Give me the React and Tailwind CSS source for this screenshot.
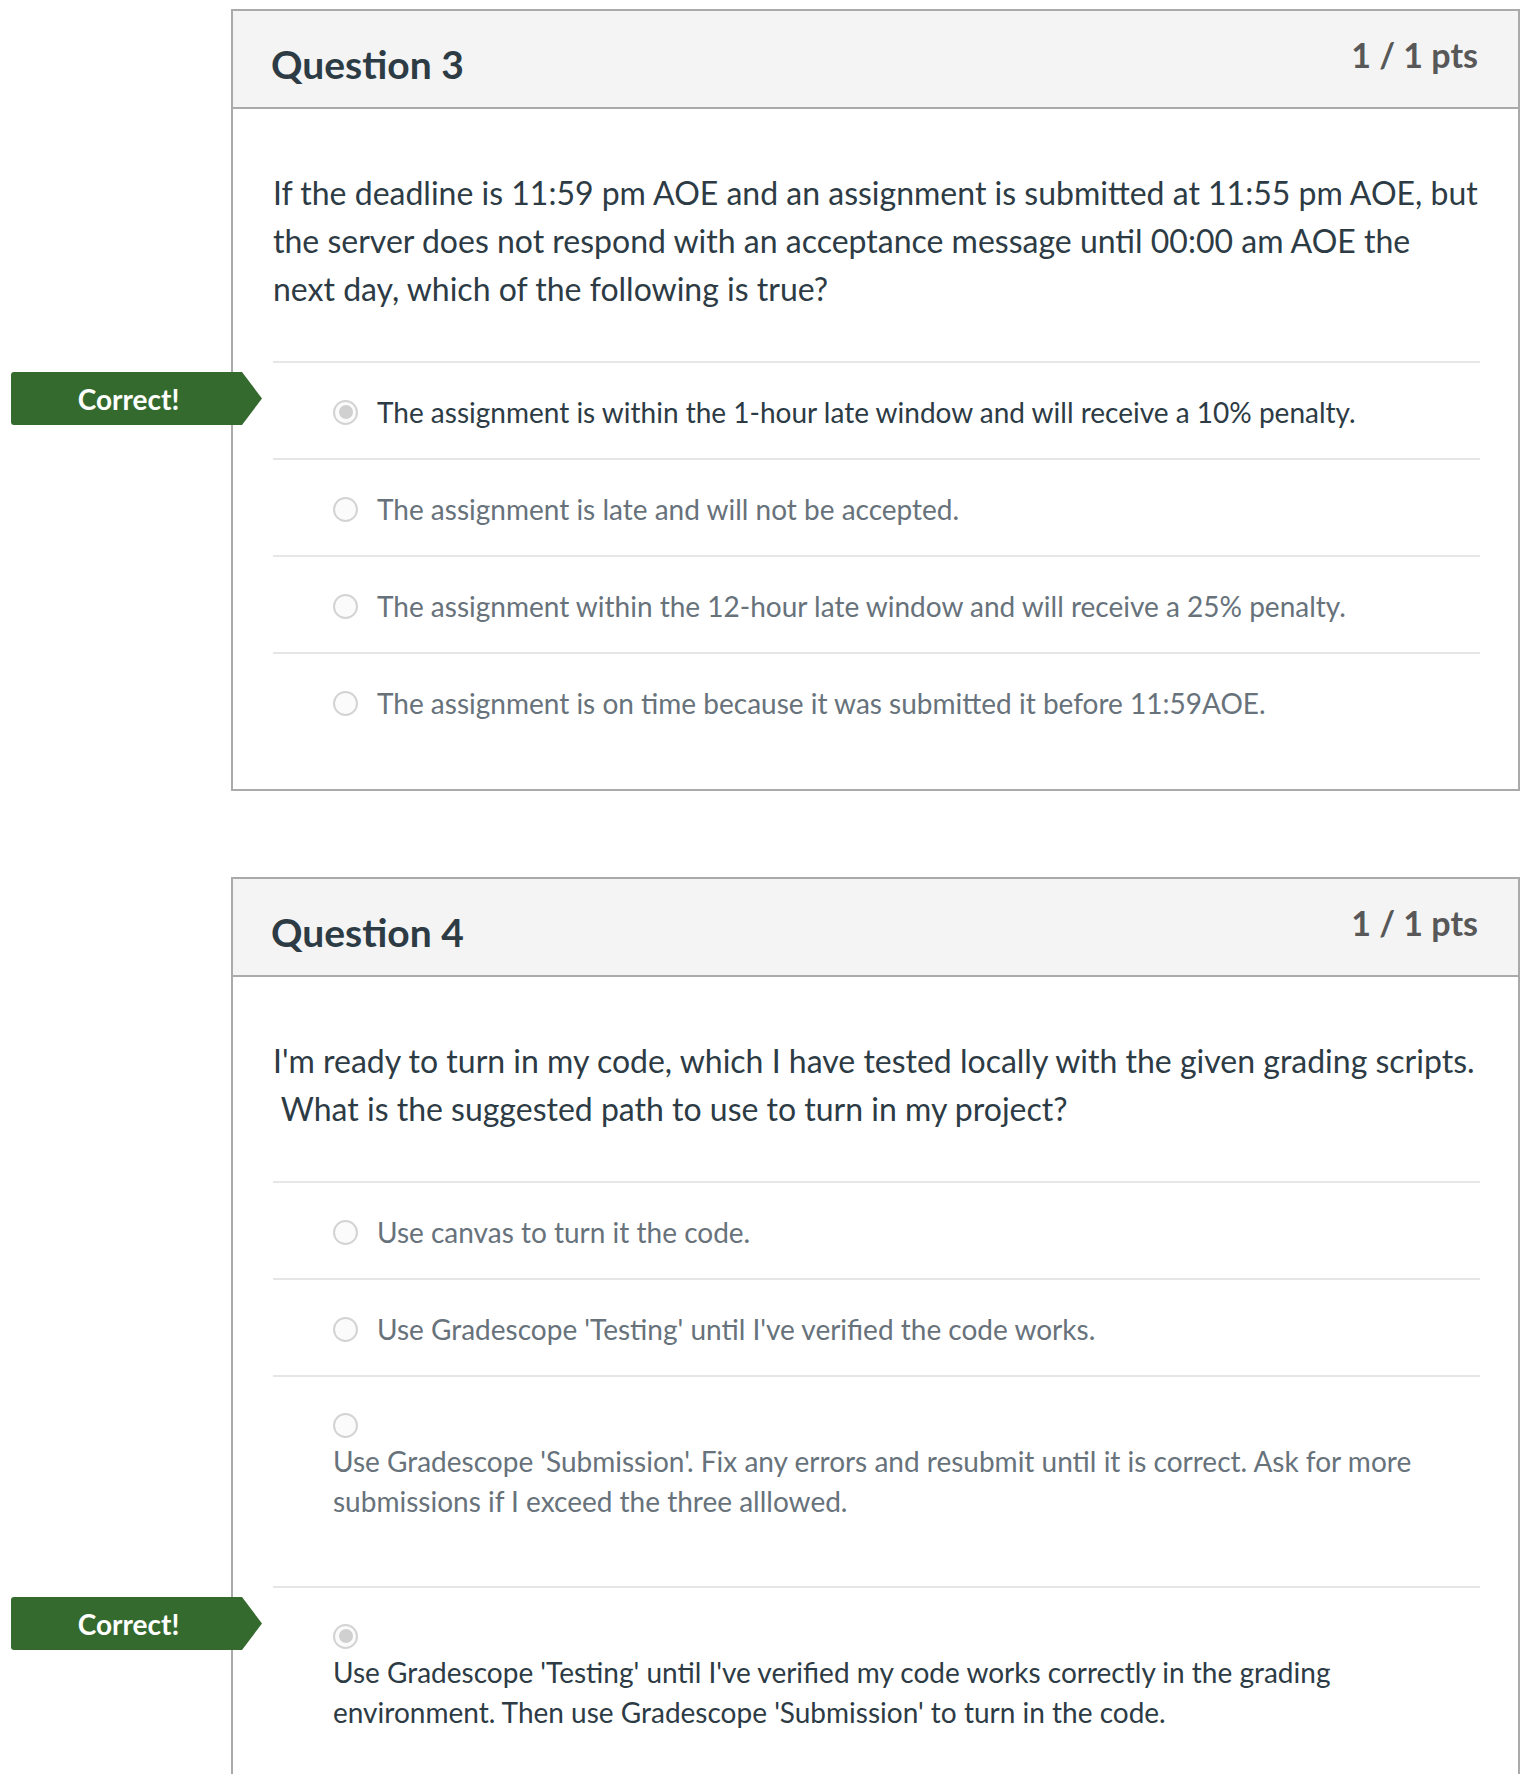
const questions = [
  {
    title: 'Question 3',
    points: '1 / 1 pts',
    text: [
      'If the deadline is 11:59 pm AOE and an assignment is submitted at 11:55 pm AOE, but',
      'the server does not respond with an acceptance message until 00:00 am AOE the',
      'next day, which of the following is true?',
    ],
    answers: [
      { lines: ['The assignment is within the 1-hour late window and will receive a 10% penalty.'], selected: true, correct: true },
      { lines: ['The assignment is late and will not be accepted.'] },
      { lines: ['The assignment within the 12-hour late window and will receive a 25% penalty.'] },
      { lines: ['The assignment is on time because it was submitted it before 11:59AOE.'] },
    ],
  },
  {
    title: 'Question 4',
    points: '1 / 1 pts',
    text: [
      "I'm ready to turn in my code, which I have tested locally with the given grading scripts.",
      '\u00a0What is the suggested path to use to turn in my project?',
    ],
    answers: [
      { lines: ['Use canvas to turn it the code.'] },
      { lines: ["Use Gradescope 'Testing' until I've verified the code works."] },
      {
        lines: [
          "Use Gradescope 'Submission'. Fix any errors and resubmit until it is correct. Ask for more",
          'submissions if I exceed the three alllowed.',
        ],
        wide: true,
      },
      {
        lines: [
          "Use Gradescope 'Testing' until I've verified my code works correctly in the grading",
          "environment. Then use Gradescope 'Submission' to turn in the code.",
        ],
        wide: true,
        selected: true,
        correct: true,
      },
    ],
  },
]

function Radio({ selected }) {
  return (
    <span className="w-[25px] h-[25px] rounded-full border-2 border-[#d3d3d3] bg-[#fbfbfb] flex items-center justify-center shrink-0">
      {selected && <span className="w-[14px] h-[14px] rounded-full bg-[#d0d0d0]" />}
    </span>
  )
}

function CorrectBadge() {
  return (
    <div className="absolute left-[-262px] top-[9px] w-[251px] h-[53px] rounded-l-[3px] bg-[#356a2e] pr-[16px] flex items-center justify-center text-white text-[28px] font-bold leading-none [clip-path:polygon(0_0,231px_0,251px_50%,231px_100%,0_100%)]">
      Correct!
    </div>
  )
}

function Answer({ a, last }) {
  const color = a.selected ? 'text-[#2d3b45]' : 'text-[#67727b]'
  return (
    <div className={`relative border-t-2 border-[#e6e6e6] ${a.wide ? (last ? 'pt-[32px] pb-[60px]' : 'pt-[32px] pb-[65px]') : 'pt-[29px] pb-[26px]'}`}>
      {a.correct && <CorrectBadge />}
      {a.wide ? (
        <div className="pl-[60px]">
          <div className="h-[32px] flex items-center">
            <Radio selected={a.selected} />
          </div>
          <div className={`text-[28px] leading-[40px] ${color}`}>
            {a.lines.map(l => (
              <div key={l} className="whitespace-nowrap">{l}</div>
            ))}
          </div>
        </div>
      ) : (
        <div className="pl-[60px] flex items-center gap-[19px]">
          <Radio selected={a.selected} />
          <span className={`text-[28px] leading-[40px] whitespace-nowrap ${color}`}>{a.lines[0]}</span>
        </div>
      )}
    </div>
  )
}

function QuestionCard({ q }) {
  return (
    <div className="w-[1289px] border-2 border-[#aaaaaa] bg-white">
      {/* Header */}
      <div className="h-[98px] bg-[#f4f4f4] border-b-2 border-[#aaaaaa] pl-[38px] pr-[40px] flex justify-between items-start">
        <h2 className="pt-[34px] text-[39px] leading-none font-bold text-[#2d3b45]">{q.title}</h2>
        <div className="pt-[27px] text-[34px] leading-none font-bold text-[#585858]">{q.points}</div>
      </div>

      {/* Body */}
      <div className="pl-[40px] pr-[38px] pt-[60px] pb-[40px]">
        <div className="text-[32px] leading-[48px] text-[#2d3b45] mb-[48px]">
          {q.text.map(l => (
            <div key={l} className="whitespace-nowrap">{l}</div>
          ))}
        </div>
        {q.answers.map((a, i) => (
          <Answer key={i} a={a} last={i === q.answers.length - 1} />
        ))}
      </div>
    </div>
  )
}

export default function App() {
  return (
    <div className="min-h-screen bg-white font-['Lato','Noto_Sans',sans-serif] pl-[231px] pt-[9px] flex flex-col gap-[86px] pb-[60px]">
      {questions.map(q => (
        <QuestionCard key={q.title} q={q} />
      ))}
    </div>
  )
}
